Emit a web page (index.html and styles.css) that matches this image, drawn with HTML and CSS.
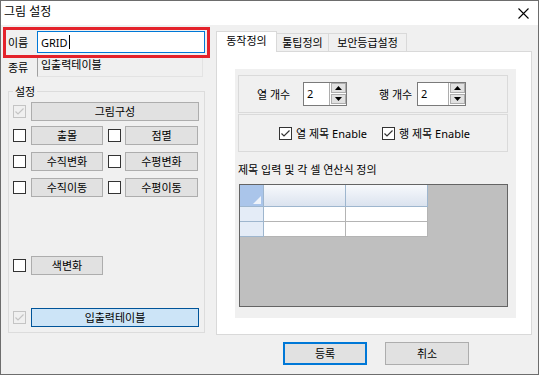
FILE: index.html
```html
<!DOCTYPE html>
<html lang="ko">
<head>
    <meta charset="UTF-8">
    <title>그림 설정</title>
    <link rel="stylesheet" href="styles.css">
</head>
<body>
    <div class="window">
        <div class="titlebar">
            <span class="title">그림 설정</span>
            <svg class="close" width="11" height="11" viewBox="0 0 11 11">
                <path d="M0.5 0.5 L10.5 10.5 M10.5 0.5 L0.5 10.5" stroke="#000" stroke-width="1.1" fill="none"/>
            </svg>
        </div>

        <div class="dialog-body">
            <div class="main">
                <div class="left">
                    <div class="field-row">
                        <span class="field-label">이름</span>
                        <div class="textbox focused">GRID<span class="caret"></span></div>
                    </div>
                    <div class="field-row type-row">
                        <span class="field-label">종류</span>
                        <div class="textbox readonly">입출력테이블</div>
                    </div>

                    <fieldset class="group">
                        <legend>설정</legend>
                        <div class="opt-row first">
                            <span class="check disabled checked">
                                <svg width="11" height="11" viewBox="0 0 11 11"><path d="M1.5 5.5 L4 8 L9.5 2.5" stroke="#c4c4c4" stroke-width="1.2" fill="none"/></svg>
                            </span>
                            <div class="btn wide">그림구성</div>
                        </div>
                        <div class="opt-row near">
                            <span class="check"></span>
                            <div class="btn">출몰</div>
                            <span class="check second"></span>
                            <div class="btn right">점멸</div>
                        </div>
                        <div class="opt-row">
                            <span class="check"></span>
                            <div class="btn">수직변화</div>
                            <span class="check second"></span>
                            <div class="btn right">수평변화</div>
                        </div>
                        <div class="opt-row">
                            <span class="check"></span>
                            <div class="btn">수직이동</div>
                            <span class="check second"></span>
                            <div class="btn right">수평이동</div>
                        </div>
                        <div class="opt-row far">
                            <span class="check"></span>
                            <div class="btn">색변화</div>
                        </div>
                        <div class="opt-row mid">
                            <span class="check disabled checked">
                                <svg width="11" height="11" viewBox="0 0 11 11"><path d="M1.5 5.5 L4 8 L9.5 2.5" stroke="#c4c4c4" stroke-width="1.2" fill="none"/></svg>
                            </span>
                            <div class="btn wide selected">입출력테이블</div>
                        </div>
                    </fieldset>
                </div>

                <div class="tabs">
                    <div class="tab-strip">
                        <div class="tab active">동작정의</div>
                        <div class="tab tip">툴팁정의</div>
                        <div class="tab security">보안등급설정</div>
                    </div>
                    <div class="tab-panel">
                        <div class="panel-inner">
                            <div class="frame spin-frame">
                                <span class="spin-label">열 개수</span>
                                <div class="spin">
                                    <span class="spin-value">2</span>
                                    <div class="spin-arrows">
                                        <span class="arrow"><svg width="7" height="4" viewBox="0 0 7 4"><polygon points="0,4 3.5,0 7,4" fill="#000"/></svg></span>
                                        <span class="arrow"><svg width="7" height="4" viewBox="0 0 7 4"><polygon points="0,0 7,0 3.5,4" fill="#000"/></svg></span>
                                    </div>
                                </div>
                                <span class="spin-label second">행 개수</span>
                                <div class="spin wide">
                                    <span class="spin-value">2</span>
                                    <div class="spin-arrows">
                                        <span class="arrow"><svg width="7" height="4" viewBox="0 0 7 4"><polygon points="0,4 3.5,0 7,4" fill="#000"/></svg></span>
                                        <span class="arrow"><svg width="7" height="4" viewBox="0 0 7 4"><polygon points="0,0 7,0 3.5,4" fill="#000"/></svg></span>
                                    </div>
                                </div>
                            </div>
                            <div class="frame check-frame">
                                <div class="check-item">
                                    <span class="check">
                                        <svg width="11" height="11" viewBox="0 0 11 11"><path d="M1.5 5.5 L4 8 L9.5 2.5" stroke="#333" stroke-width="1.2" fill="none"/></svg>
                                    </span>
                                    <span>열 제목 Enable</span>
                                </div>
                                <div class="check-item">
                                    <span class="check">
                                        <svg width="11" height="11" viewBox="0 0 11 11"><path d="M1.5 5.5 L4 8 L9.5 2.5" stroke="#333" stroke-width="1.2" fill="none"/></svg>
                                    </span>
                                    <span>행 제목 Enable</span>
                                </div>
                            </div>

                            <div class="sheet-caption">제목 입력 및 각 셀 연산식 정의</div>
                            <div class="sheet">
                                <div class="sheet-grid">
                                    <div class="cell corner"></div>
                                    <div class="cell head"></div>
                                    <div class="cell head"></div>
                                    <div class="cell row-head"></div>
                                    <div class="cell"></div>
                                    <div class="cell"></div>
                                    <div class="cell row-head"></div>
                                    <div class="cell"></div>
                                    <div class="cell"></div>
                                </div>
                            </div>
                        </div>
                    </div>
                </div>
            </div>

            <div class="actions">
                <button class="dialog-btn default">등록</button>
                <button class="dialog-btn">취소</button>
            </div>
        </div>

        <div class="highlight"></div>
    </div>
</body>
</html>
```

FILE: styles.css
```css
body {
    margin: 0;
    background-color: white;
    font-family: "Noto Sans", "Noto Sans CJK KR", sans-serif;
    font-size: 11px;
    line-height: 15px;
    color: black;
}

.window {
    position: relative;
    width: 539px;
    height: 375px;
    box-sizing: border-box;
    border: 1px solid #6d6d6d;
    background-color: #f0f0f0;
    display: flex;
    flex-direction: column;
}

.titlebar {
    height: 24px;
    background-color: white;
    display: flex;
    justify-content: space-between;
    align-items: flex-start;
}

.title {
    font-size: 12px;
    line-height: 16px;
    margin: 3px 0 0 3px;
}

.close {
    margin: 7px 9px 0 0;
}

.dialog-body {
    flex: 1;
    display: flex;
    flex-direction: column;
}

.main {
    display: flex;
    padding: 6px 0 0 6px;
}

.left {
    width: 198px;
    margin-right: 11px;
}

.field-row {
    display: flex;
    align-items: center;
    height: 22px;
}

.field-label {
    width: 29px;
    padding-left: 1px;
}

.textbox {
    width: 168px;
    height: 22px;
    box-sizing: border-box;
    border: 1px solid #0078d7;
    background-color: white;
    padding-left: 3px;
    display: flex;
    align-items: center;
}

.caret {
    width: 1px;
    height: 14px;
    margin-left: 1px;
    background-color: black;
}

.type-row {
    margin-top: 4px;
    height: 20px;
}

.textbox.readonly {
    width: 166px;
    height: 20px;
    align-items: flex-start;
    line-height: 13px;
    background-color: #f0f0f0;
    border-color: #a0a0a0 #e3e3e3 #e3e3e3 #a0a0a0;
}

/* 설정 그룹 */
.group {
    width: 197px;
    box-sizing: border-box;
    margin: 7px 0 0 1px;
    padding: 0 4px 5px 4px;
    border: 1px solid #dcdcdc;
    min-width: 0;
}

.group legend {
    padding: 0 2px;
    line-height: 15px;
}

.opt-row {
    display: flex;
    align-items: center;
    height: 19px;
    margin-top: 7px;
}

.opt-row.first { margin-top: 3px; }
.opt-row.near { margin-top: 5px; }
.opt-row.far { margin-top: 59px; }
.opt-row.mid { margin-top: 33px; }

.check {
    width: 13px;
    height: 13px;
    box-sizing: border-box;
    border: 1px solid #333;
    background-color: white;
    margin-right: 5px;
    flex-shrink: 0;
    display: flex;
}

.check.second {
    margin-left: 5px;
    margin-right: 4px;
}

.check.disabled {
    border-color: #c4c4c4;
    background-color: #f0f0f0;
}

.btn {
    width: 72px;
    height: 19px;
    box-sizing: border-box;
    border: 1px solid #adadad;
    background-color: #e1e1e1;
    display: flex;
    align-items: center;
    justify-content: center;
}

.btn.right { width: 73px; }
.btn.wide { width: 168px; }

.btn.selected {
    background-color: #cce4f7;
    border-color: #005499;
}

/* 탭 */
.tabs {
    width: 316px;
    display: flex;
    flex-direction: column;
}

.tab-strip {
    display: flex;
    align-items: flex-end;
    height: 20px;
}

.tab {
    height: 18px;
    box-sizing: border-box;
    border: 1px solid #d9d9d9;
    border-bottom: none;
    background-color: #f0f0f0;
    padding-top: 1px;
    margin-left: -1px;
    text-align: center;
}

.tab.active {
    position: relative;
    z-index: 1;
    width: 61px;
    height: 21px;
    margin: 0 0 -1px 0;
    padding-top: 1px;
    background-color: white;
}

.tab.tip { width: 53px; }
.tab.security { width: 79px; }

.tab-panel {
    height: 284px;
    box-sizing: border-box;
    border: 1px solid #d9d9d9;
    background-color: white;
    padding: 17px 15px 16px 18px;
}

.panel-inner {
    height: 100%;
    box-sizing: border-box;
    background-color: #f0f0f0;
    padding: 6px 0 0 3px;
}

.frame {
    width: 270px;
    height: 38px;
    box-sizing: border-box;
    border: 1px solid #dadada;
    display: flex;
    align-items: center;
}

.frame + .frame {
    margin-top: 1px;
}

.spin-frame {
    padding-left: 18px;
}

.spin-label {
    width: 46px;
}

.spin-label.second {
    width: 38px;
    margin-left: 32px;
}

.spin {
    width: 44px;
    height: 24px;
    box-sizing: border-box;
    border: 1px solid #7a7a7a;
    background-color: white;
    display: flex;
}

.spin.wide { width: 49px; }

.spin-value {
    flex: 1;
    padding-left: 3px;
    line-height: 21px;
}

.spin-arrows {
    display: flex;
    flex-direction: column;
    gap: 1px;
    padding: 0 0 0 1px;
    border-left: 1px solid #adadad;
}

.arrow {
    width: 15px;
    height: 10px;
    box-sizing: border-box;
    border: 1px solid #adadad;
    background-color: #e1e1e1;
    display: flex;
    align-items: center;
    justify-content: center;
}

.check-frame {
    padding-left: 40px;
}

.check-item {
    display: flex;
    align-items: center;
    width: 103px;
}

.check-item .check {
    margin-right: 4px;
}

.sheet-caption {
    margin-top: 10px;
}

.sheet {
    width: 269px;
    height: 123px;
    box-sizing: border-box;
    margin: 7px 0 0 1px;
    border: 1px solid #646464;
    background-color: #bfbfbf;
}

.sheet-grid {
    display: grid;
    grid-template-columns: 24px 82px 82px;
    grid-template-rows: 22px 15px 15px;
    width: max-content;
}

.cell {
    box-sizing: border-box;
    background-color: white;
    border-right: 1px solid #b4b4b4;
    border-bottom: 1px solid #b4b4b4;
}

.cell.head {
    background: linear-gradient(#f7f9fc, #dbe3ef);
    border-color: #9eb6ce;
}

.cell.row-head {
    background-color: #e4ecf7;
    border-color: #9eb6ce;
}

.cell.corner {
    position: relative;
    background-color: #aac5ea;
    border-color: #9eb6ce;
}

.cell.corner::after {
    content: "";
    position: absolute;
    right: 2px;
    bottom: 2px;
    border-style: solid;
    border-width: 0 0 8px 8px;
    border-color: transparent transparent #eef3fa transparent;
}

.actions {
    display: flex;
    gap: 18px;
    padding-left: 282px;
    margin-top: 7px;
}

.dialog-btn {
    width: 84px;
    height: 23px;
    box-sizing: border-box;
    padding: 0;
    border: 1px solid #adadad;
    background-color: #e1e1e1;
    font: inherit;
    color: black;
}

.dialog-btn.default {
    border: 2px solid #0078d7;
}

.highlight {
    position: absolute;
    left: 2px;
    top: 26px;
    width: 207px;
    height: 31px;
    box-sizing: border-box;
    border: 3px solid #e4222b;
}
```
